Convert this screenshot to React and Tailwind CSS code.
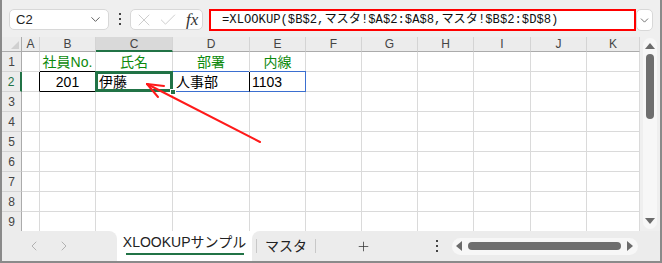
import React from 'react'
import { ChevronDown, ChevronLeft, ChevronRight, Plus, X, Check } from 'lucide-react'

const uiFont = { fontFamily: '"Liberation Sans", "Noto Sans CJK JP", sans-serif' }
const cols = ['A', 'B', 'C', 'D', 'E', 'F', 'G', 'H', 'I', 'J', 'K']
const rows = [1, 2, 3, 4, 5, 6, 7, 8, 9]

function Dots({ className }) {
    return (
        <svg width="4" height="14" viewBox="0 0 4 14" className={className}>
            <rect x="1" y="1" width="2" height="2" fill="#444" />
            <rect x="1" y="6" width="2" height="2" fill="#444" />
            <rect x="1" y="11" width="2" height="2" fill="#444" />
        </svg>
    )
}

function Tri({ dir, className }) {
    const pts = {
        up: '1,8 6,2 11,8',
        down: '1,3 6,9 11,3',
        left: '8,1 2,6 8,11',
        right: '3,1 9,6 3,11',
    }[dir]
    return (
        <svg width="12" height="12" viewBox="0 0 12 12" className={className}>
            <polygon points={pts} fill="#6b6b6b" />
        </svg>
    )
}

function HeaderCell({ label, selected }) {
    return (
        <div
            className={`h-[15px] flex items-center justify-center text-[12px] leading-none text-[#444] border-r border-[#d4d4d4] ${
                selected ? 'bg-[#d9d9d9] border-b-2 border-b-[#217346]' : 'bg-[#ececec] border-b border-b-[#ababab]'
            }`}
        >
            {label}
        </div>
    )
}

function Cell({ r, c }) {
    const base = 'h-[20px] border-r border-b border-[#dadada] relative flex items-center text-[14px] leading-none'
    if (r === 1) {
        const heads = { B: '社員No.', C: '氏名', D: '部署', E: '内線' }
        return (
            <div className={`${base} justify-center text-[#0c8a0c]`}>
                {heads[c] || ''}
            </div>
        )
    }
    if (r === 2) {
        if (c === 'A') return <div className={`${base} border-r-black`} />
        if (c === 'B')
            return (
                <div className={`${base} justify-center text-black border-r-black border-b-black border-t border-t-black -mt-px h-[21px]`}>
                    201
                </div>
            )
        if (c === 'C')
            return (
                <div className={`${base} pl-[3px] text-black border-b-black border-r-black`}>
                    伊藤
                    <div className="absolute -left-[1px] -top-[1px] -right-[1px] -bottom-[1px] border-[3px] border-[#217346] pointer-events-none" />
                    <div className="absolute -right-[4px] -bottom-[4px] w-[6px] h-[6px] bg-[#217346] border border-white z-10" />
                </div>
            )
        if (c === 'D')
            return (
                <div className={`${base} pl-[3px] text-black border-b-[#3b6fd0] border-r-black`}>
                    人事部
                    <div className="absolute left-0 right-0 -top-px h-px bg-[#3b6fd0]" />
                </div>
            )
        if (c === 'E')
            return (
                <div className={`${base} pl-[2px] text-black border-b-[#3b6fd0] border-r-[#3b6fd0]`}>
                    1103
                    <div className="absolute left-0 -right-px -top-px h-px bg-[#3b6fd0]" />
                </div>
            )
    }
    return <div className={base} />
}

export default function App() {
    return (
        <div
            className="relative w-[662px] h-[263px] overflow-hidden bg-[#efefef] border-l-2 border-r-2 border-b-2 border-[#8a8a8a]"
            style={uiFont}
        >
            {/* formula bar */}
            <div className="h-[37px] flex items-start pt-[9px]">
                <div className="ml-[7px] w-[100px] h-[21px] bg-white border border-[#d8d8d8] rounded-[5px] flex items-center justify-between pl-[6px] pr-[5px]">
                    <span className="text-[13px] text-[#222]">C2</span>
                    <ChevronDown size={15} strokeWidth={1.5} color="#555" />
                </div>
                <Dots className="ml-[9px] mt-[3px]" />
                <div className="ml-[8px] w-[73px] h-[21px] bg-white border border-[#d8d8d8] rounded-[5px] flex items-center pl-[3px] gap-[4px]">
                    <X size={20} strokeWidth={1} color="#c4c4c4" />
                    <Check size={20} strokeWidth={1} color="#c4c4c4" />
                    <span
                        className="ml-[4px] text-[17px] italic text-[#333] leading-none"
                        style={{ fontFamily: '"Liberation Serif", serif' }}
                    >
                        fx
                    </span>
                </div>
                <div className="ml-[6px] w-[427px] h-[22px] bg-white border-2 border-[#ff0000] flex items-center pl-[11px]">
                    <span
                        className="text-[12.2px] text-[#111] leading-none whitespace-nowrap"
                        style={{ fontFamily: '"Liberation Mono", "Noto Sans CJK JP", monospace' }}
                    >
                        =XLOOKUP($B$2,マスタ!$A$2:$A$8,マスタ!$B$2:$D$8)
                    </span>
                </div>
                <div className="w-[17px] h-[22px] bg-white border border-[#d8d8d8] rounded-[5px] flex items-center justify-center">
                    <ChevronDown size={13} strokeWidth={1.5} color="#555" />
                </div>
            </div>

            {/* sheet area */}
            <div className="flex h-[194px] bg-white">
                <div className="w-[638px] h-[194px] overflow-hidden">
                    <div className="grid grid-cols-[20px_18px_56px_77px_77px_56px_56px_56px_56px_57px_56px_53px]">
                        <div className="h-[15px] bg-[#ececec] border-r border-b border-[#ababab] flex items-end justify-end pr-[2px] pb-[2px]">
                            <svg width="8" height="8" viewBox="0 0 8 8">
                                <polygon points="8,0 8,8 0,8" fill="#d0d0d0" />
                            </svg>
                        </div>
                        {cols.map(c => (
                            <HeaderCell key={c} label={c} selected={c === 'C'} />
                        ))}
                        {rows.map(r => (
                            <React.Fragment key={r}>
                                <div
                                    className={`h-[20px] bg-[#ececec] border-b border-[#d4d4d4] flex items-center justify-center text-[12px] leading-none ${
                                        r === 2
                                            ? 'text-[#217346] border-r-2 border-r-[#217346]'
                                            : 'text-[#444] border-r border-r-[#ababab]'
                                    }`}
                                >
                                    {r}
                                </div>
                                {cols.map(c => (
                                    <Cell key={c} r={r} c={c} />
                                ))}
                            </React.Fragment>
                        ))}
                    </div>
                </div>
                {/* vertical scrollbar */}
                <div className="w-[20px] bg-[#efefef] flex justify-center pt-[1px] pb-[2px]">
                    <div className="w-[14px] h-full bg-[#f7f7f7] rounded-full flex flex-col items-center pt-[3px] pb-[2px]">
                        <Tri dir="up" />
                        <div className="mt-[1px] w-[8px] h-[65px] rounded-full bg-[#6e6e6e]" />
                        <div className="flex-1" />
                        <Tri dir="down" />
                    </div>
                </div>
            </div>

            {/* sheet tabs */}
            <div className="flex h-[30px] bg-white">
                <div className="w-[115px] bg-[#ececec] rounded-tr-[8px] flex items-center pl-[24px] gap-[14px]">
                    <ChevronLeft size={16} strokeWidth={1.3} color="#a8a8a8" />
                    <ChevronRight size={16} strokeWidth={1.3} color="#a8a8a8" />
                </div>
                <div className="w-[135px] h-[25px] bg-white rounded-b-[6px] flex flex-col items-center justify-center">
                    <span className="text-[14px] text-[#222] leading-none mt-[2px]">XLOOKUPサンプル</span>
                    <div className="mt-[4px] w-[118px] h-[2px] bg-[#217346]" />
                </div>
                <div className="flex-1 bg-[#ececec] rounded-tl-[8px] flex items-center">
                    <div className="ml-[4px] w-px h-[14px] bg-[#c8c8c8]" />
                    <span className="w-[58px] text-center text-[14px] text-[#222] leading-none">マスタ</span>
                    <div className="w-px h-[14px] bg-[#c8c8c8]" />
                    <div className="ml-[40px]">
                        <Plus size={15} strokeWidth={1.2} color="#333" />
                    </div>
                    <Dots className="ml-[64px]" />
                    <div className="ml-[13px] w-[186px] h-[17px] bg-[#f7f7f7] rounded-full flex items-center px-[2px]">
                        <Tri dir="left" />
                        <div className="ml-[2px] w-[153px] h-[8px] rounded-full bg-[#6e6e6e]" />
                        <div className="flex-1" />
                        <Tri dir="right" />
                    </div>
                </div>
            </div>

            {/* annotation arrow */}
            <svg className="absolute left-0 top-0 pointer-events-none" width="662" height="263" viewBox="0 0 662 263">
                <g stroke="#ff1a1a" strokeWidth="2" strokeLinecap="round" fill="none">
                    <line x1="258" y1="142" x2="145" y2="84" />
                    <line x1="145" y1="84" x2="162" y2="86" />
                    <line x1="145" y1="84" x2="156" y2="97" />
                </g>
            </svg>
        </div>
    )
}
